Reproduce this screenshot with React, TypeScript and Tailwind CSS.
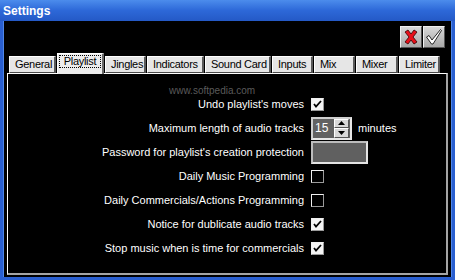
import React from "react";

const tabs = [
  { name: "General", w: "w-[47px]" },
  { name: "Playlist", w: "w-[47px]", active: true },
  { name: "Jingles", w: "w-[41px]" },
  { name: "Indicators", w: "w-[57px]" },
  { name: "Sound Card", w: "w-[66px]" },
  { name: "Inputs", w: "w-[41px]" },
  { name: "Mix", w: "w-[41px]" },
  { name: "Mixer", w: "w-[42px]" },
  { name: "Limiter", w: "w-[41px]" },
];

function Check({ checked }: { checked?: boolean }) {
  return (
    <div
      className={`w-[13px] h-[13px] border border-t-[#f0f0f0] border-l-[#f0f0f0] border-r-[#9a9a9a] border-b-[#9a9a9a] flex items-center justify-center ${
        checked ? "bg-[#f4f4f4]" : "bg-black"
      }`}
    >
      {checked && (
        <svg width="9" height="9" viewBox="0 0 9 9">
          <path d="M1 4 L3 6.5 L8 1" stroke="#000" strokeWidth="1.8" fill="none" />
        </svg>
      )}
    </div>
  );
}

function Spin() {
  return (
    <div className="flex items-center gap-[6px]">
      <div className="w-[41px] h-[23px] bg-[#626262] border-2 border-t-[#cfcfcf] border-l-[#cfcfcf] border-r-[#e8e8e8] border-b-[#e8e8e8] flex items-center">
        <span className="text-white text-[12px] pl-[2px] flex-1 leading-none">15</span>
        <div className="flex flex-col w-[15px] h-[19px] mr-[1px]">
          <div className="flex-1 bg-[#d8d8d8] border border-t-white border-l-white border-r-[#555] border-b-[#555] flex items-center justify-center">
            <svg width="7" height="4" viewBox="0 0 7 4">
              <path d="M0 4 L3.5 0 L7 4 Z" fill="#000" />
            </svg>
          </div>
          <div className="flex-1 bg-[#d8d8d8] border border-t-white border-l-white border-r-[#555] border-b-[#555] flex items-center justify-center">
            <svg width="7" height="4" viewBox="0 0 7 4">
              <path d="M0 0 L3.5 4 L7 0 Z" fill="#000" />
            </svg>
          </div>
        </div>
      </div>
      <span className="text-white">minutes</span>
    </div>
  );
}

const rows: { label: string; control: React.ReactNode }[] = [
  { label: "Undo playlist's moves", control: <Check checked /> },
  { label: "Maximum length of audio tracks", control: <Spin /> },
  {
    label: "Password for playlist's creation protection",
    control: (
      <div className="w-[57px] h-[23px] bg-[#606060] border-2 border-t-[#bdbdbd] border-l-[#bdbdbd] border-r-[#e4e4e4] border-b-[#e4e4e4]" />
    ),
  },
  { label: "Daily Music Programming", control: <Check /> },
  { label: "Daily Commercials/Actions Programming", control: <Check /> },
  { label: "Notice for dublicate audio tracks", control: <Check checked /> },
  { label: "Stop music when is time for commercials", control: <Check checked /> },
];

export default function App() {
  return (
    <div
      className="w-[455px] h-[280px] flex flex-col bg-[#2a5fd0] overflow-hidden"
      style={{ fontFamily: '"Liberation Sans", Arial, sans-serif' }}
    >
      {/* title bar */}
      <div className="h-[21px] shrink-0 flex items-center pl-[3px] bg-gradient-to-b from-[#4c8cec] via-[#2d68d8] to-[#2459c6]">
        <span className="text-white font-bold text-[12px]">Settings</span>
      </div>

      <div className="flex-1 mx-[3px] mb-[3px] bg-black border-l border-r border-[#4f86e8] relative text-[11px]">
        {/* close / ok */}
        <div className="flex justify-end gap-[1px] pt-[5px] pr-[6px]">
          <button className="w-[22px] h-[22px] flex items-center justify-center bg-gradient-to-b from-[#d8d8d8] to-[#a8a8a8] border border-t-[#f0f0f0] border-l-[#f0f0f0] border-r-[#555] border-b-[#555]">
            <svg width="16" height="16" viewBox="0 0 16 16">
              <path d="M2 3 L5 1 L8 5 L11 1 L14 3 L10 8 L14 13 L11 15 L8 11 L5 15 L2 13 L6 8 Z" fill="#e8101a" stroke="#300" strokeWidth="0.8" />
            </svg>
          </button>
          <button className="w-[22px] h-[22px] flex items-center justify-center bg-gradient-to-b from-[#d8d8d8] to-[#a8a8a8] border border-t-[#f0f0f0] border-l-[#f0f0f0] border-r-[#555] border-b-[#555]">
            <svg width="18" height="18" viewBox="0 0 18 18">
              <path d="M1.5 9 L4 7.5 L7 12 L15.5 1.5 L16.5 2.5 L8 16 L6.5 16 Z" fill="#fff" stroke="#111" strokeWidth="0.9" strokeLinejoin="round" />
            </svg>
          </button>
        </div>

        {/* tabs */}
        <div className="flex items-end gap-[1px] pl-[5px] mt-[5px] h-[20px] relative z-10 tracking-[-0.3px]">
          {tabs.map((t) =>
            t.active ? (
              <div
                key={t.name}
                className={`${t.w} h-[21px] -mb-[1px] bg-[#ececec] border-t border-l border-white border-r-2 border-r-[#6a6a6a] pt-[1px] px-[1px] text-black text-[11px]`}
              >
                <div className="border border-dotted border-black h-[13px] flex items-center justify-center leading-none pb-[1px]">
                  {t.name}
                </div>
              </div>
            ) : (
              <div
                key={t.name}
                className={`${t.w} h-[17px] bg-[#e6e6e6] border-t border-l border-white border-r-2 border-r-[#5a5a5a] border-b border-b-[#4a4a4a] pl-[5px] flex items-center text-black text-[11px] leading-none whitespace-nowrap`}
              >
                {t.name}
              </div>
            )
          )}
        </div>

        {/* panel */}
        <div className="ml-[3px] w-[441px] h-[202px] border-t border-l border-white border-r-2 border-b-2 border-r-[#a4a4a4] border-b-[#a4a4a4] relative">
          <div className="absolute left-[161px] top-[12px] text-[#5a5a5a] text-[10px] leading-none pointer-events-none">
            www.softpedia.com
          </div>
          <div className="grid grid-cols-[296px_auto] auto-rows-[24px] gap-x-[7px] pt-[18px] items-center">
            {rows.map((r) => (
              <React.Fragment key={r.label}>
                <div className="text-right text-white whitespace-nowrap">{r.label}</div>
                <div>{r.control}</div>
              </React.Fragment>
            ))}
          </div>
        </div>
      </div>
    </div>
  );
}
